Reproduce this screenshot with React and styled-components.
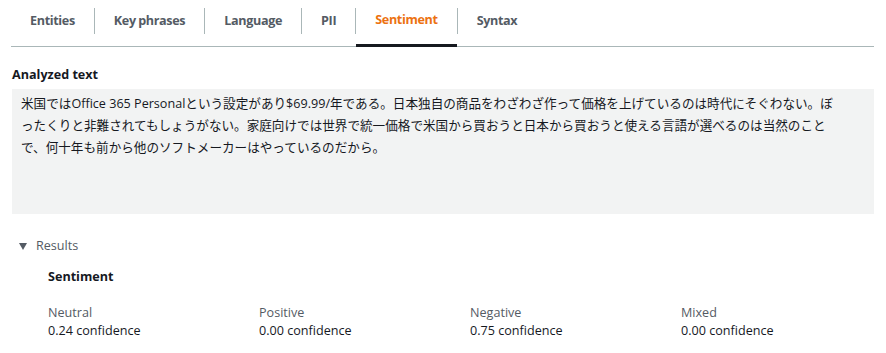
import React from "react";
import styled, { createGlobalStyle } from "styled-components";

const Global = createGlobalStyle`
  html, body { margin: 0; padding: 0; background: #ffffff; }
  body {
    font-family: "Open Sans", "Noto Sans CJK JP", sans-serif;
    font-size: 12.6px;
    color: #16191f;
  }
`;

const Page = styled.div`
  padding: 0 12px 0 11px;
`;

const TabList = styled.div`
  display: flex;
  align-items: stretch;
  height: 46px;
  border-bottom: 1px solid #aab7b8;
`;

const Tab = styled.div`
  display: flex;
  align-items: center;
  padding: 0 19px 6px 19px;
  margin-bottom: ${(p) => (p.$active ? "-1px" : "0")};
  border-bottom: ${(p) => (p.$active ? "3px solid #16191f" : "0")};
  font-weight: 700;
  letter-spacing: -0.35px;
  word-spacing: -0.5px;
  color: ${(p) => (p.$active ? "#ec7211" : "#545b64")};
  white-space: nowrap;
`;

const Divider = styled.div`
  width: 1px;
  background: #aab7b8;
  margin: 8px 0 12px;
`;

const SectionTitle = styled.div`
  font-weight: 700;
  color: #16191f;
  margin: 19px 0 0 1px;
  line-height: 18px;
`;

const TextBox = styled.div`
  margin: 5px 0 0 1px;
  height: 125px;
  box-sizing: border-box;
  background: #f2f3f3;
  padding: 4px 20px 0 9px;
  line-height: 22px;
  color: #16191f;
`;

const Results = styled.div`
  margin-top: 23px;
  padding-left: 7px;
`;

const ResultsHeader = styled.div`
  display: flex;
  align-items: center;
  gap: 9px;
  color: #545b64;
  line-height: 18px;
`;

const Caret = styled.svg`
  margin-left: 1px;
`;

const ResultsBody = styled.div`
  padding: 13px 0 0 30px;
`;

const SubTitle = styled.div`
  font-weight: 700;
  color: #16191f;
  line-height: 18px;
`;

const Grid = styled.div`
  display: grid;
  grid-template-columns: repeat(4, 211px);
  margin-top: 18px;
`;

const Label = styled.div`
  color: #545b64;
  line-height: 18px;
`;

const Value = styled.div`
  color: #16191f;
  line-height: 18px;
`;

const tabs = ["Entities", "Key phrases", "Language", "PII", "Sentiment", "Syntax"];
const scores = [
  ["Neutral", "0.24"],
  ["Positive", "0.00"],
  ["Negative", "0.75"],
  ["Mixed", "0.00"],
];

export default function App() {
  return (
    <Page>
      <Global />
      <TabList>
        {tabs.map((t, i) => (
          <React.Fragment key={t}>
            {i > 0 && <Divider />}
            <Tab $active={t === "Sentiment"}>{t}</Tab>
          </React.Fragment>
        ))}
      </TabList>
      <SectionTitle>Analyzed text</SectionTitle>
      <TextBox>
        米国ではOffice 365 Personalという設定があり$69.99/年である。日本独自の商品をわざわざ作って価格を上げているのは時代にそぐわない。ぼ
        <br />
        ったくりと非難されてもしょうがない。家庭向けでは世界で統一価格で米国から買おうと日本から買おうと使える言語が選べるのは当然のこと
        <br />
        で、何十年も前から他のソフトメーカーはやっているのだから。
      </TextBox>
      <Results>
        <ResultsHeader>
          <Caret width="8" height="7" viewBox="0 0 8 7">
            <path d="M0 0 L8 0 L4 7 Z" fill="#545b64" />
          </Caret>
          <span>Results</span>
        </ResultsHeader>
        <ResultsBody>
          <SubTitle>Sentiment</SubTitle>
          <Grid>
            {scores.map(([name, v]) => (
              <div key={name}>
                <Label>{name}</Label>
                <Value>{v} confidence</Value>
              </div>
            ))}
          </Grid>
        </ResultsBody>
      </Results>
    </Page>
  );
}
